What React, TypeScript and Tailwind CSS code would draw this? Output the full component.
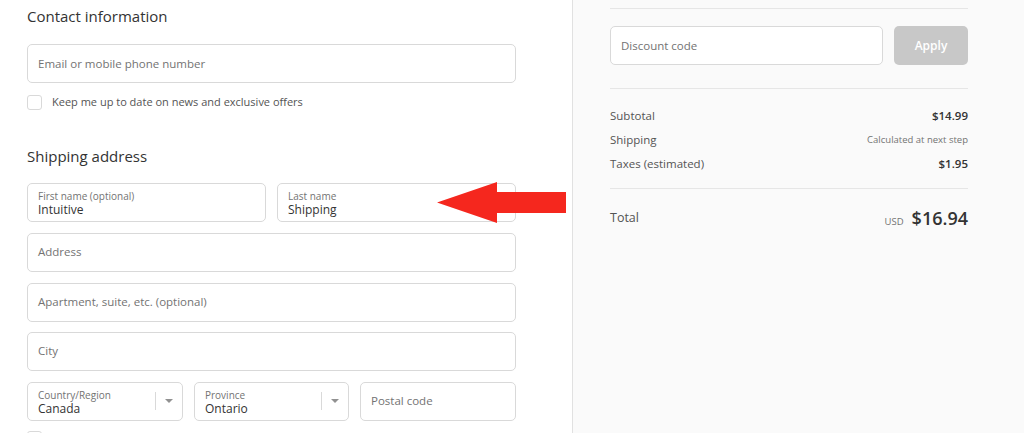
import React from 'react';

const font = { fontFamily: '"Open Sans", "Noto Sans", sans-serif' };

const Field = ({ placeholder, className = '' }: { placeholder: string; className?: string }) => (
  <div className={`h-[39px] rounded-[5px] border border-[#d9d9d9] bg-white flex items-center px-[10px] min-w-0 ${className}`}>
    <span className="text-[11.5px] text-[#737373] whitespace-nowrap">{placeholder}</span>
  </div>
);

const Filled = ({ label, value, select, className = '' }: { label: string; value: string; select?: boolean; className?: string }) => (
  <div className={`h-[39px] rounded-[5px] border border-[#d9d9d9] bg-white flex items-center pl-[10px] min-w-0 ${className}`}>
    <div className="flex-1 flex flex-col mt-[2px]">
      <span className="text-[10px] leading-[13px] text-[#737373] whitespace-nowrap translate-y-[1px]">{label}</span>
      <span className="text-[12px] leading-[15px] text-[#333] whitespace-nowrap">{value}</span>
    </div>
    {select && (
      <div className="flex items-center h-full">
        <div className="w-px h-[18px] bg-[#d9d9d9]" />
        <svg width="26" height="10" viewBox="0 0 26 10">
          <path d="M9 3 L17 3 L13 7 Z" fill="#919191" />
        </svg>
      </div>
    )}
  </div>
);

const Checkbox = () => <div className="w-[15px] h-[15px] rounded-[3px] border border-[#d9d9d9] bg-white" />;

export default function App() {
  return (
    <div className="relative w-[1024px] h-[433px] overflow-hidden flex bg-white" style={font}>
      {/* Left: form */}
      <div className="w-[572px] shrink-0 pl-[27px] pt-[5px]">
        <div className="w-[489px] flex flex-col">
          <h2 className="text-[15px] text-[#333] leading-[22px]">Contact information</h2>
          <Field placeholder="Email or mobile phone number" className="mt-[17px]" />
          <div className="flex items-center gap-[10px] mt-[11px]">
            <Checkbox />
            <span className="text-[11px] text-[#545454]">Keep me up to date on news and exclusive offers</span>
          </div>
          <h2 className="text-[15px] text-[#333] leading-[22px] mt-[34px]">Shipping address</h2>
          <div className="flex gap-[11px] mt-[16px]">
            <Filled label="First name (optional)" value="Intuitive" className="flex-1" />
            <Filled label="Last name" value="Shipping" className="flex-1" />
          </div>
          <Field placeholder="Address" className="mt-[11px]" />
          <Field placeholder="Apartment, suite, etc. (optional)" className="mt-[11px]" />
          <Field placeholder="City" className="mt-[10px]" />
          <div className="flex gap-[11px] mt-[11px]">
            <Filled label="Country/Region" value="Canada" select className="w-[156px]" />
            <Filled label="Province" value="Ontario" select className="w-[155px]" />
            <Field placeholder="Postal code" className="w-[156px]" />
          </div>
          <div className="mt-[10px]">
            <Checkbox />
          </div>
        </div>
      </div>

      {/* Right: summary */}
      <div className="flex-1 bg-[#fafafa] border-l border-[#e1e1e1] pl-[37px] pt-[8px]">
        <div className="w-[358px] flex flex-col">
          <div className="h-px bg-[#e6e6e6]" />
          <div className="flex gap-[11px] mt-[17px]">
            <div className="flex-1 h-[39px] rounded-[5px] border border-[#d9d9d9] bg-white flex items-center px-[10px]">
              <span className="text-[11.5px] text-[#737373] mt-px">Discount code</span>
            </div>
            <div className="w-[74px] h-[39px] rounded-[5px] bg-[#c8c8c8] flex items-center justify-center">
              <span className="text-[12px] font-semibold text-white">Apply</span>
            </div>
          </div>
          <div className="h-px bg-[#e6e6e6] mt-[23px]" />
          <div className="flex flex-col gap-[6px] mt-[18px] text-[11.5px]">
            <div className="flex justify-between items-center h-[18px]">
              <span className="text-[#545454]">Subtotal</span>
              <span className="text-[#333] font-semibold">$14.99</span>
            </div>
            <div className="flex justify-between items-center h-[18px]">
              <span className="text-[#545454]">Shipping</span>
              <span className="text-[#737373] text-[9.5px]">Calculated at next step</span>
            </div>
            <div className="flex justify-between items-center h-[18px]">
              <span className="text-[#545454]">Taxes (estimated)</span>
              <span className="text-[#333] font-semibold">$1.95</span>
            </div>
          </div>
          <div className="h-px bg-[#e6e6e6] mt-[15px]" />
          <div className="flex justify-between items-center mt-[17px] h-[24px]">
            <span className="text-[12.5px] text-[#545454]">Total</span>
            <div className="flex items-baseline gap-[8px]">
              <span className="text-[9.5px] text-[#737373]">USD</span>
              <span className="text-[18px] font-semibold text-[#333]">$16.94</span>
            </div>
          </div>
        </div>
      </div>

      {/* Annotation arrow */}
      <svg className="absolute left-[437px] top-[182px]" width="130" height="42" viewBox="0 0 130 42">
        <path d="M0 20.5 L60 0 L60 10 L129 10 L129 31 L60 31 L60 41 Z" fill="#f5271e" />
      </svg>
    </div>
  );
}
